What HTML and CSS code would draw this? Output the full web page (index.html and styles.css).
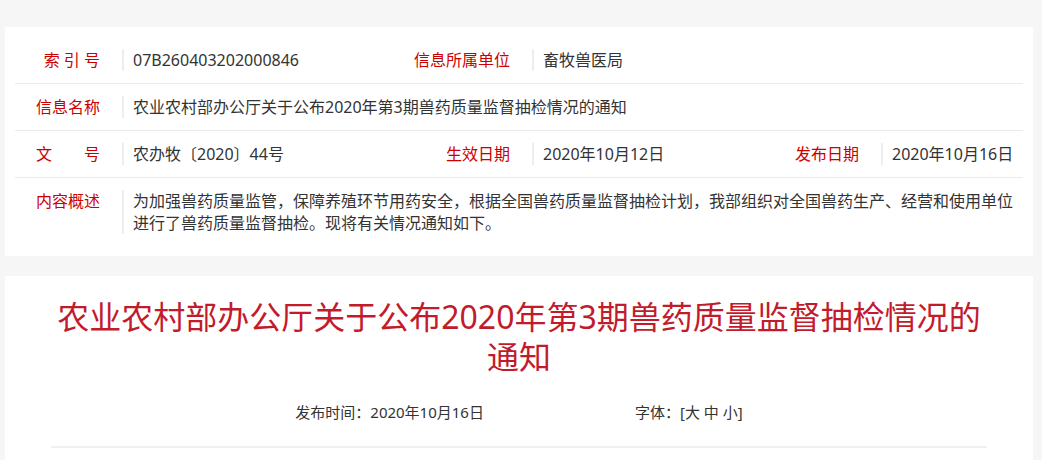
FILE: index.html
```html
<!DOCTYPE html>
<html>
<head>
    <title>农业农村部办公厅关于公布2020年第3期兽药质量监督抽检情况的通知</title>
    <meta charset="UTF-8">
    <meta name="viewport" content="width=device-width, initial-scale=1">
    <link rel="stylesheet" href="styles.css">
</head>
<body>
    <div class="page">
        <div class="card info">
            <div class="row row-two">
                <div class="label spaced">索 引 号</div>
                <div class="value">07B260403202000846</div>
                <div class="label">信息所属单位</div>
                <div class="value">畜牧兽医局</div>
            </div>
            <div class="row row-one">
                <div class="label">信息名称</div>
                <div class="value">农业农村部办公厅关于公布2020年第3期兽药质量监督抽检情况的通知</div>
            </div>
            <div class="row row-three">
                <div class="label"><span class="wide">文号</span></div>
                <div class="value">农办牧〔2020〕44号</div>
                <div class="label">生效日期</div>
                <div class="value">2020年10月12日</div>
                <div class="label">发布日期</div>
                <div class="value">2020年10月16日</div>
            </div>
            <div class="row row-one last">
                <div class="label">内容概述</div>
                <div class="value">为加强兽药质量监管，保障养殖环节用药安全，根据全国兽药质量监督抽检计划，我部组织对全国兽药生产、经营和使用单位进行了兽药质量监督抽检。现将有关情况通知如下。</div>
            </div>
        </div>

        <div class="card article">
            <h1 class="title">农业农村部办公厅关于公布2020年第3期兽药质量监督抽检情况的通知</h1>
            <div class="meta">
                <span>发布时间：2020年10月16日</span>
                <span>字体：[<a href="#">大</a> <a href="#">中</a> <a href="#">小</a>]</span>
            </div>
            <div class="rule"></div>
        </div>
    </div>
</body>
</html>
```

FILE: styles.css
```css
body {
    margin: 0;
    background-color: #f6f6f6;
    font-family: "Noto Sans", "Noto Sans CJK SC", sans-serif;
    color: #333;
}

.page {
    width: 1028px;
    margin-left: 5px;
    padding-top: 27px;
}

.card {
    background-color: #fff;
}

.info {
    padding: 10px 10px;
}

.row {
    display: grid;
    padding: 12px 0;
    border-bottom: 1px solid #eaeaea;
    font-size: 16px;
    line-height: 22px;
}

.row.last {
    border-bottom: none;
}

.row-one {
    grid-template-columns: 107px 1fr;
}

.row-two {
    grid-template-columns: 107px 280px 130px 1fr;
}

.row-three {
    grid-template-columns: 107px 280px 130px 219px 130px 1fr;
}

.label {
    color: #cc0000;
    text-align: right;
    padding-right: 22px;
    white-space: nowrap;
}

.label .wide {
    display: inline-block;
    width: 64px;
    text-align-last: justify;
}

.value {
    border-left: 2px solid #eeeeee;
    padding-left: 9px;
    padding-right: 8px;
}

.article {
    margin-top: 20px;
    padding: 21px 46px 12px;
}

.title {
    margin: 0;
    font-size: 32px;
    line-height: 40px;
    font-weight: normal;
    color: #c21b2c;
    text-align: center;
}

.meta {
    display: flex;
    justify-content: center;
    gap: 151px;
    margin-top: 23px;
    font-size: 15px;
    line-height: 24px;
}

.meta a {
    color: #333;
    text-decoration: none;
}

.rule {
    margin-top: 22px;
    height: 2px;
    background-color: #f0f0f0;
}
```
